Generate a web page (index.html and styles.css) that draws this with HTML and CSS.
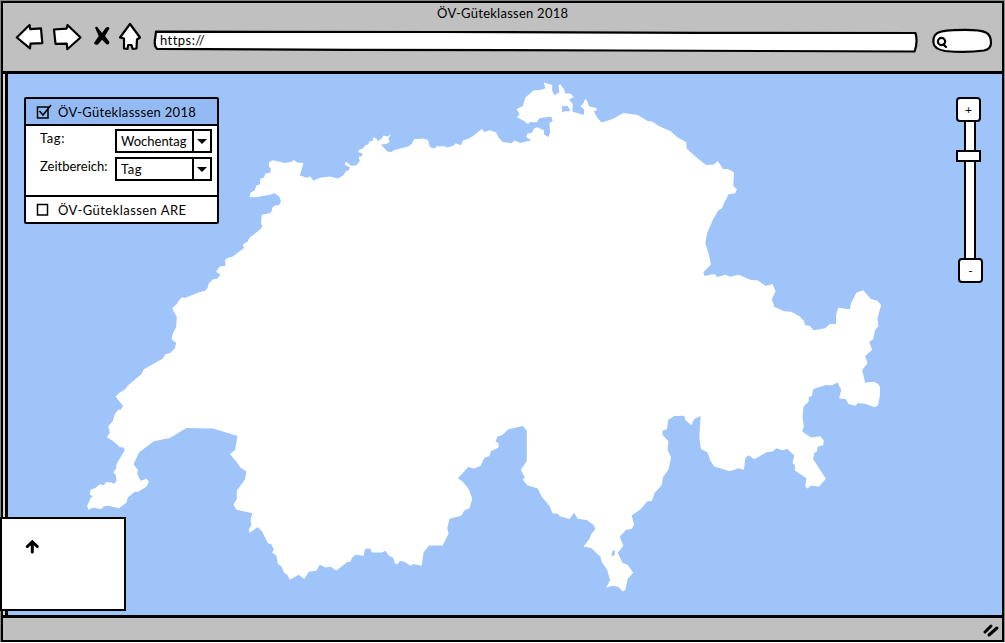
FILE: index.html
```html
<!DOCTYPE html>
<html lang="de">
<head>
<meta charset="utf-8">
<title>ÖV-Güteklassen 2018</title>
<link rel="stylesheet" href="styles.css">
</head>
<body>
<div class="browser">
  <header class="chrome">
    <div class="title"><span>ÖV-Güteklassen 2018</span></div>
    <div class="toolbar">
      <svg class="ink back" width="30" height="32" viewBox="15 22 30 32"><path d="M16.800 37.500L29.500 25L30.300 29.200L41 28.400L42.300 43.200L30.500 43.700L30 48.300Z"/></svg>
      <svg class="ink forward" width="32" height="32" viewBox="52 22 32 32"><path d="M54 29.500L66.500 28.700L67.500 25L80.500 37.500L67.300 49.200L66.800 43.600L55.500 43.800Z"/></svg>
      <svg class="stop" width="18" height="32" viewBox="93 22 18 32"><path d="M95 27.500Q97 25.500 98.500 28.500L102 33L106 27.500Q109 26 109.500 28.500L105 36L109.500 42Q109 45.500 106.500 44.300L102 39.800L98 44.500Q94.500 45.500 94 43L98.700 36Z"/></svg>
      <svg class="ink home" width="24" height="32" viewBox="118 22 24 32"><path d="M120 37.500L130 24L140 37.500L137 39.500L136.500 48.500L132.500 48.800L131.500 45L128.200 45L127.500 49L124 48.500L124 38.500Z"/></svg>
      <div class="address">
        <svg class="ink" width="766" height="32" viewBox="153 22 766 32"><path d="M156 31.700L440 32L700 32.800L915.500 33Q918 42 914.600 51.500L620 50.500L350 49.800L157 48.800Q153.500 46 155.400 37Z"/></svg>
        <span>https://</span>
      </div>
      <svg class="ink search" width="62" height="32" viewBox="931 22 62 32"><path d="M935 35Q939 30.500 953 30.200Q979 29 986 32.500Q991 35 991 43Q991 49 984 50.500Q966 53 945 51Q934 49 933.500 43Q933 38 935 35Z"/><circle cx="941.500" cy="41.500" r="3.600"/><path d="M943.500 44.500L946 47"/></svg>
    </div>
  </header>
  <main class="viewport">
    <svg class="map" width="995" height="541" viewBox="8 74 995 541">
      <path fill-rule="evenodd" d="M88.300 510L87.300 506L91 497.700L93 496.700L89.700 494.300L90.700 490L95 488.300L100 484.300L104 485.300L106 482.300L110.700 482.300L114.300 484L116.700 480.700L115.700 475L113.300 472.300L116 469L116.700 464L125 450L123.300 447.300L120 447.300L113.300 441L107 437.300L110 432.700L108.300 426L112.700 421.700L115 414L118.300 409.700L120.700 409.700L123.300 406L115.700 396.700L118.300 393.700L125.700 388.700L127.700 385.700L141.700 374L144 369.300L162.700 358.700L165.700 354.300L170.700 352.700L175 348.300L176.300 343L171.700 339.300L173.300 332.700L176.300 327.300L177 317.300L172.300 308.300L176.700 304.300L180 299.300L182.700 297L184.300 298.300L200 292L205 291L207.700 288.300L209 283.300L213.300 279.300L217.300 278.700L220.700 274.700L216.300 271.700L220 266.300L225.700 265.700L225.300 260L228.300 257.700L232.700 256.700L244.300 248L243 244.300L247.700 241.700L250 237.300L260 229.700L262.700 226.300L261.300 223.300L262 214.700L270 213L272 211L272.700 207.300L275 205.300L279.300 205L281.300 201L279.300 196L275 193L270 194.700L256 197L249.700 197L250.700 192.700L255 190L256.700 185.300L260 184.300L260.700 178.300L264.300 177.300L265.700 173.700L270.700 172.300L271 168.300L269 166L269.300 161.700L273.300 160L285 162.700L291 161.700L294.300 159.700L297.300 162.300L303.700 162.700L302.300 168.300L300 175L306.700 177.700L310.700 176.300L313.700 180.700L320 177.700L330 176.300L338.300 178.300L344 175L346 171L349.300 169.700L350.300 167.300L345 164.300L346.300 161.300L351.700 165.700L356.700 165L360.300 160.700L359 156.700L362.700 155.700L362.300 152.700L358 152L360 149.300L363.300 148.300L366 144.700L368.300 144.300L370 141.300L373 140.700L373.700 137.300L376.700 138L378 140.700L381.300 139L384 135.300L387.700 136.300L391.700 134L388.700 138L390 141.700L386.700 143.700L381.300 144.300L387.700 151.300L391.700 151.700L395 149.700L408.300 146.300L412.300 143.700L414.300 139L423.300 138.300L428.300 139.700L430.300 146.700L435 148.300L437.300 146L444 146L448.300 147.300L454 145.300L456.300 143L461.300 145L463.700 140L468.300 138.700L473.300 136L479.300 131L482.300 128.700L485 131.700L490.700 130L496.700 132.300L499 137.300L503.300 141.700L512.300 143L515 140.300L520.700 142.700L532 140L526.700 136.700L528 133.300L532 132.700L535 128L537.700 127L544.300 130L544.700 134.300L548.700 136.700L550.700 132.700L550 122.700L553.300 120.700L551.700 116.300L540 118L537.300 122L531 121.800L528.300 123.700L525 121L517.300 116.700L520.300 114L517 109L523.300 105.700L526 97.300L534 90.300L540.700 89.700L546 88.300L544.300 82.300L552.700 84.700L552.700 90.700L555.300 95L560 92L559 85L560.700 84L564.700 89.300L565.700 93.300L571 93.300L574.300 96.700L569.700 99.300L573.300 104L573 111.300L581.700 114L584.300 114.700L584.700 109.300L581 106L584.300 102.700L585.700 98.300L588.300 101.700L589.300 106L597 107.700L597.300 110.300L594.300 111L597.700 117.300L601.700 121.700L603.300 122L613.300 118.700L624 112.700L638.300 114.700L648.300 120.700L652.700 121.300L660 126L671 130.700L678.300 137.300L687 142L687.300 148.300L697.300 157.300L706.700 164.700L715 164.300L718.300 160.700L724 168.700L728.300 168.700L734.700 172L734 186L737.700 189L735.700 193.300L729.300 194L725 202.700L722.700 208L718.700 210.700L713.300 220L707.700 233.300L706 243.300L709.300 253.300L711.700 264.300L704 272.300L705.300 276L715 274L718.300 277L726 274.700L730.700 276.700L739.300 274.700L751.700 280L758.300 280.300L766.700 286L773.300 284L776.300 291.300L772.700 299.300L775 306.700L785 311.300L791.700 311.700L800 316L805 321.300L805.700 325L810.700 326L814.300 330.300L826 328.300L830.700 324L837 324L837 315L839 307.700L850.700 309.300L852 302.700L857.300 292.700L864 290.300L871.700 299L878.300 300.700L882 305L878.300 318.300L879.300 326L876 330L874 339.300L870 341.700L873 350L866 356L868.300 363.300L863 370L866 382.700L875 381.700L879 384L881 387.300L880.700 396L879 405L875.700 407.300L866.700 404L859 403L856 405.700L849.300 404L846.700 399.300L840 398.300L842 390L838.300 382.300L833.300 385.300L826.700 385L814 389L812.700 396L809.700 397L809.300 401.700L804.300 406.700L803.300 416.700L804.700 426.700L803 431.700L811.700 437.700L821 436.300L824.700 440.700L824 445.300L818.700 446.700L817.700 451.700L815 453L814 459.300L826.700 479L820 486.700L811.700 486L808.300 488.700L806 486.700L807.300 478.300L795.700 470.700L795.700 465L793.300 463.300L795 455.700L788.300 449L782.700 450.300L777.300 448.300L773.300 451.700L767.300 452.300L755 459.300L749.300 455.300L746 458.300L744.700 470L739.300 468.300L730.700 471.300L715 466.700L711 460.700L708.300 452.700L701.700 449L700 438.300L701.300 416L695 419L692 425.300L686 420L685 415.700L675 416L668.700 420L667.700 429.300L663 431L663.300 435L669 441L668.300 450L671.700 457.300L669.300 469.300L663.700 477.300L662.300 485.300L655 493.300L652.700 501L647.700 501.700L641.300 509.300L632.300 515.700L634.700 524.700L632.300 529.300L626.700 530L620.300 537L624 546L618.300 553.300L623.300 563.300L628.300 565L633.700 573L628.300 579.300L626 590L623.300 591.700L619.300 587.300L613.300 586L606.700 588L610.700 580.300L607.700 570L602.300 562.300L601 557L591.700 548.300L584 546.700L590 539.300L592 534L595.700 530L595 526L587.300 520.300L578.300 519L574.700 513L570 519.300L561 516.700L558.300 514L553 513.300L550 506L542 496.700L538.300 488.700L527.700 485.300L523.300 480L525.300 477.700L521.300 470L527.300 461L527.300 430.700L523.300 426L509 429.300L502.300 435.300L498.300 436.300L496 441.300L499 443.300L499 447.700L491.300 451.300L490 456L484.700 458L481 466L474.300 468.700L468.700 467L458.300 478.300L463.300 482L469.300 489.300L472.700 499L470 508.300L464.700 510.700L461.700 516L450 519L447.700 528.300L449 534L443 545.700L429.300 545.700L424 552.700L422 566L414 564.300L411 566L404 561.700L400.300 561.300L397.700 564.700L395 563.300L393.700 558L389.300 556L385.700 551L382.300 552.700L372 552.700L370.700 548.700L365.300 549L364 556L356 555L352.300 558L350.700 562L347.700 562.300L336.700 570.700L331 567L326 567.700L320 565L316.700 571L309 572L304.700 579.300L299 575L290 580L287.700 575.300L284.300 572.700L281.700 566.700L278 564L276.700 555.700L272.300 552.700L274.300 550L271.300 544L268.300 543.700L262.300 531.700L258 527.300L250 533L249 530L251.700 525L250.700 520L252.700 513.300L236.700 510L233.700 505L237 499L237 490.700L245 480L246.700 471.700L240.700 467.700L235.700 460.700L230 454L235.300 450L237.700 436L213.300 428.700L186.700 428L170 438L154 441.300L139.300 452.300L133.700 464.300L138.300 470.700L137.300 474L140.700 481L146.700 479L149 482L146.700 486.700L138.300 492L135 492L127.700 498L126.700 502.700L119 508.300L108.300 506L104 506.300L101 509.300L93.300 507.700ZM562.300 106L568.300 105.700L571 111L566 111L563 112.300ZM613 551L615.800 551L615 556L612 556Z"/>
    </svg>
    <section class="layers">
      <div class="layer active">
        <svg class="check" width="18" height="18" viewBox="35 102 18 18"><path d="M37.500 106L48 106L48 117L37.500 117ZM39.500 110L43 114L51 104"/></svg>
        <span class="t-active">ÖV-Güteklasssen 2018</span>
      </div>
      <div class="options">
        <div class="option"><label class="t-day">Tag:</label>
          <div class="select"><span class="t-week">Wochentag</span><i></i></div></div>
        <div class="option"><label class="t-range">Zeitbereich:</label>
          <div class="select"><span class="t-dayval">Tag</span><i></i></div></div>
      </div>
      <div class="layer">
        <svg class="check" width="18" height="18" viewBox="35 201 18 18"><path d="M37.500 204.500L47.500 204.500L47.500 215L37.500 215Z"/></svg>
        <span class="t-are">ÖV-Güteklassen ARE</span>
      </div>
    </section>
    <div class="zoom">
      <div class="key">+</div>
      <div class="track"><div class="thumb"></div></div>
      <div class="key minus">-</div>
    </div>
  </main>
  <footer class="status">
    <svg width="20" height="18" viewBox="981 621 20 18"><path d="M985 632L991 626M989 635L997 628"/></svg>
  </footer>
  <aside class="north">
    <svg width="16" height="16" viewBox="24 539 16 16"><path d="M32.300 552V542M27.300 546.500L32.300 541.800L37.300 546.500"/></svg>
  </aside>
</div>
</body>
</html>
```
FILE: styles.css
```css
* { box-sizing: border-box; }
body {
  margin: 0;
  background: #fff;
  color: #000;
  font-family: Lato, "Liberation Sans", sans-serif;
  font-size: 13px;
  line-height: 16px;
}
svg { display: block; flex: none; }
span, label { white-space: nowrap; }
.browser {
  position: relative;
  display: flex;
  flex-direction: column;
  width: 1003px;
  height: 641px;
  margin: 1px 0 0 1px;
  border: 2px solid #000;
  outline: 1px solid #858985;
}
.chrome {
  height: 71px;
  border-bottom: 3px solid #000;
  background: #c0c0c0;
}
.title {
  display: flex;
  height: 19px;
  padding: 2px 0 0 434px;
}
.title span { letter-spacing: .25px; }
.toolbar { display: flex; padding-left: 12px; }
.ink { fill: #fff; stroke: #000; stroke-width: 2.200; stroke-linejoin: round; stroke-linecap: round; }
.forward { margin-left: 7px; }
.stop { margin-left: 9px; }
.home { margin-left: 7px; }
.address { display: grid; margin-left: 11px; }
.address > * { grid-area: 1 / 1; }
.address span { padding: 10px 0 0 7px; letter-spacing: .45px; }
.search { margin-left: 12px; }
.viewport {
  position: relative;
  height: 541px;
  margin-left: 2px;
  border-left: 3px solid #000;
  background: #9fc4f9;
}
.viewport::before {
  content: "";
  position: absolute;
  left: -5px;
  width: 2px;
  height: 541px;
  background: #d8d8d4;
}
.map { width: 100%; fill: #fff; }
.layers {
  position: absolute;
  left: 16px;
  top: 23px;
  width: 195px;
  height: 127px;
  border: 2px solid #000;
  border-radius: 2px;
  background: #fff;
}
.layer { display: flex; align-items: center; height: 25px; padding-left: 9px; gap: 5px; }
.layer.active { height: 27px; border-bottom: 2px solid #000; background: #94baf3; }
.t-active { letter-spacing: .3px; }
.t-are { letter-spacing: .45px; }
.t-day, .t-dayval { letter-spacing: .6px; }
.check { fill: none; stroke: #000; stroke-width: 1.500; }
.options { height: 71px; padding: 3px 5px 0 14px; border-bottom: 2px solid #000; }
.option { display: flex; justify-content: space-between; height: 28px; }
.option label { padding-top: 1px; }
.select {
  display: flex;
  justify-content: space-between;
  width: 97px;
  height: 24px;
  border: 2px solid #000;
  background: #fff;
}
.select span { padding: 2px 0 0 4px; }
.select i { display: grid; place-items: center; width: 18px; border-left: 2px solid #000; }
.select i::after {
  content: "";
  border: 5px solid transparent;
  border-top: 5px solid #000;
  border-bottom: 0;
}
.zoom { position: absolute; left: 948px; top: 23px; width: 27px; }
.key {
  display: grid;
  place-items: center;
  width: 25px;
  height: 25px;
  border: 2px solid #000;
  border-radius: 4px;
  background: #fff;
  font-size: 12px;
}
.minus { margin-left: 2px; }
.track {
  width: 12px;
  height: 136px;
  margin-left: 8px;
  padding-top: 28px;
  border: solid #000;
  border-width: 0 2px;
  background: #fff;
}
.thumb { width: 25px; height: 12px; margin-left: -10px; border: 2px solid #000; background: #fff; }
.status {
  display: flex;
  justify-content: flex-end;
  height: 25px;
  padding-right: 1px;
  padding-top: 3px;
  border-top: 3px solid #000;
  background: #c0c0c0;
}
.status path { fill: none; stroke: #000; stroke-width: 3; stroke-linecap: round; }
.north {
  position: absolute;
  left: -3px;
  top: 514px;
  width: 126px;
  height: 94px;
  padding: 20px 0 0 22px;
  border: 2px solid #000;
  background: #fff;
}
.north path { fill: none; stroke: #000; stroke-width: 3; stroke-linecap: round; }
```
